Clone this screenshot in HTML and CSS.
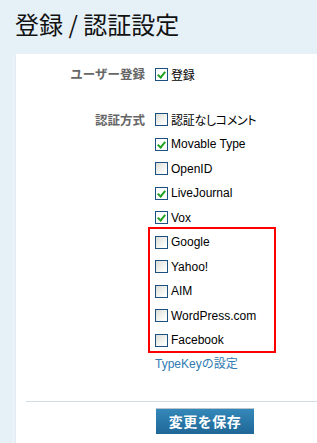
FILE: index.html
```html
<!DOCTYPE html>
<html>
<head>
<meta charset="utf-8">
<title>登録 / 認証設定</title>
<link rel="stylesheet" href="styles.css">
</head>
<body>
<h1 class="title">登録 / 認証設定</h1>
<div class="panel">
	<div class="row">
		<div class="label">ユーザー登録</div>
		<div class="field">
			<div class="opt"><span class="cb on"></span><span class="jp">登録</span></div>
		</div>
	</div>
	<div class="row">
		<div class="label">認証方式</div>
		<div class="field">
			<div class="opt"><span class="cb"></span><span class="jp">認証なしコメント</span></div>
			<div class="opt"><span class="cb on"></span>Movable Type</div>
			<div class="opt"><span class="cb"></span>OpenID</div>
			<div class="opt"><span class="cb on"></span>LiveJournal</div>
			<div class="opt"><span class="cb on"></span>Vox</div>
			<div class="hl">
				<div class="opt"><span class="cb"></span>Google</div>
				<div class="opt"><span class="cb"></span>Yahoo!</div>
				<div class="opt"><span class="cb"></span>AIM</div>
				<div class="opt"><span class="cb"></span>WordPress.com</div>
				<div class="opt"><span class="cb"></span>Facebook</div>
			</div>
			<a class="link" href="#">TypeKeyの設定</a>
		</div>
	</div>
	<div class="foot">
		<button class="save" type="button">変更を保存</button>
	</div>
</div>
</body>
</html>
```

FILE: styles.css
```css
*{margin:0;padding:0;box-sizing:border-box;}
html,body{height:100%;}
body{background:#e6f0f7;font-family:"Liberation Sans","Noto Sans CJK JP",sans-serif;font-size:12px;color:#000;overflow:hidden;}
.title{height:54px;padding:9px 0 0 15px;font-family:"Noto Sans CJK JP",sans-serif;font-size:24px;font-weight:normal;line-height:30px;color:#111;}
.panel{margin-left:15px;background:#fff;height:389px;padding-top:8px;border-left:1px solid #e1ecf5;box-shadow:-2px 0 3px #edf3f8;}
.row{display:flex;}
.row + .row{margin-top:21px;}
.label{width:129px;text-align:right;font-family:"Noto Sans CJK JP",sans-serif;font-weight:bold;font-size:12.5px;color:#666;line-height:24.5px;}
.field{margin-left:10px;}
.opt{display:flex;align-items:center;height:24.5px;white-space:nowrap;}
.jp{font-family:"Noto Sans CJK JP",sans-serif;font-size:12px;font-feature-settings:"palt";letter-spacing:-0.3px;}
.cb{width:13px;height:13px;margin-right:3px;border:1px solid #1c5080;background:linear-gradient(135deg,#dcdcd6,#fff 85%);position:relative;flex:none;}
.cb.on{background:#fff;}
.cb.on::after{content:"";position:absolute;left:3px;top:1px;width:3px;height:6px;border:solid #21a121;border-width:0 2px 2px 0;transform:rotate(40deg);}
.hl{position:relative;}
.hl::after{content:"";position:absolute;left:-7px;top:-3px;width:124px;bottom:0;border:2px solid #f00;}
.link{display:block;margin-top:3px;line-height:16px;color:#2f7bb2;text-decoration:none;}
.foot{margin:29px 0 0 10px;border-top:1px solid #d3dde6;padding:6px 0 0 130px;}
.save{width:98px;height:26px;border:0;border-top:1px solid #b9c4cc;background:linear-gradient(#3488b9,#1f6797);color:#fff;font-family:"Noto Sans CJK JP",sans-serif;font-weight:bold;font-size:14px;letter-spacing:0.5px;}
```
